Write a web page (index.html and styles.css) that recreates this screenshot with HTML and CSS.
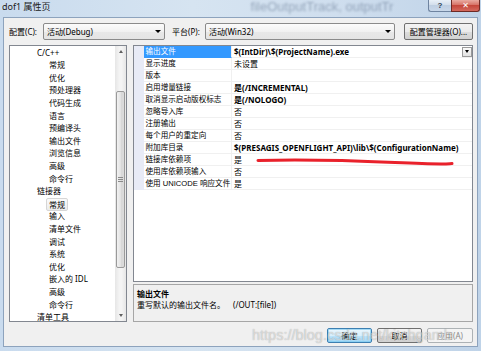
FILE: index.html
```html
<!DOCTYPE html>
<html lang="zh-CN">
<head>
<meta charset="utf-8">
<title>dof1 属性页</title>
<link rel="stylesheet" href="styles.css">
</head>
<body>
<div class="window">
  <div class="titlebar">
    <span class="title">dof1 属性页</span>
    <span class="glass-text">fileOutputTrack, outputTr</span>
    <div class="caption">
      <div class="cap-help">?</div>
      <div class="cap-close">✕</div>
    </div>
  </div>
  <div class="client">
    <div class="toprow">
      <span class="lbl lbl-cfg">配置(C):</span>
      <div class="combo combo-cfg"><span>活动(Debug)</span><i class="arrow"></i></div>
      <span class="lbl lbl-plat">平台(P):</span>
      <div class="combo combo-plat"><span>活动(Win32)</span><i class="arrow"></i></div>
      <div class="btn btn-cfgmgr">配置管理器(O)...</div>
    </div>
    <div class="main">
      <div class="tree">
        <ul class="tree-list">
          <li class="l1">C/C++</li>
          <li class="l2">常规</li>
          <li class="l2">优化</li>
          <li class="l2">预处理器</li>
          <li class="l2">代码生成</li>
          <li class="l2">语言</li>
          <li class="l2">预编译头</li>
          <li class="l2">输出文件</li>
          <li class="l2">浏览信息</li>
          <li class="l2">高级</li>
          <li class="l2">命令行</li>
          <li class="l1">链接器</li>
          <li class="l2"><span class="sel">常规</span></li>
          <li class="l2">输入</li>
          <li class="l2">清单文件</li>
          <li class="l2">调试</li>
          <li class="l2">系统</li>
          <li class="l2">优化</li>
          <li class="l2">嵌入的 IDL</li>
          <li class="l2">高级</li>
          <li class="l2">命令行</li>
          <li class="l1">清单工具</li>
        </ul>
        <div class="vscroll">
          <div class="sb-btn"><i class="tri-up"></i></div>
          <div class="sb-track">
            <div class="sb-thumb"><span class="grip"></span></div>
          </div>
          <div class="sb-btn"><i class="tri-down"></i></div>
        </div>
      </div>
      <div class="rightpane">
        <div class="grid">
          <div class="row"><span class="gut"></span><span class="name selected">输出文件</span><span class="val b">$(IntDir)\$(ProjectName).exe<span class="dd"><i class="arrow"></i></span></span></div>
          <div class="row"><span class="gut"></span><span class="name">显示进度</span><span class="val">未设置</span></div>
          <div class="row"><span class="gut"></span><span class="name">版本</span><span class="val"></span></div>
          <div class="row"><span class="gut"></span><span class="name">启用增量链接</span><span class="val b">是(/INCREMENTAL)</span></div>
          <div class="row"><span class="gut"></span><span class="name">取消显示启动版权标志</span><span class="val b">是(/NOLOGO)</span></div>
          <div class="row"><span class="gut"></span><span class="name">忽略导入库</span><span class="val">否</span></div>
          <div class="row"><span class="gut"></span><span class="name">注册输出</span><span class="val">否</span></div>
          <div class="row"><span class="gut"></span><span class="name">每个用户的重定向</span><span class="val">否</span></div>
          <div class="row"><span class="gut"></span><span class="name">附加库目录</span><span class="val b">$(PRESAGIS_OPENFLIGHT_API)\lib\$(ConfigurationName)</span></div>
          <div class="row"><span class="gut"></span><span class="name">链接库依赖项</span><span class="val">是</span></div>
          <div class="row"><span class="gut"></span><span class="name">使用库依赖项输入</span><span class="val">否</span></div>
          <div class="row"><span class="gut"></span><span class="name">使用 UNICODE 响应文件</span><span class="val">是</span></div>
        </div>
        <div class="desc">
          <div class="desc-title">输出文件</div>
          <div class="desc-text"><span class="desc-main">重写默认的输出文件名。</span><span>(/OUT:[file])</span></div>
        </div>
      </div>
    </div>
    <div class="buttons">
      <div class="btn btn-default">确定</div>
      <div class="btn">取消</div>
      <div class="btn btn-disabled">应用(A)</div>
    </div>
  </div>
  <svg class="redmark" width="481" height="351" viewBox="0 0 481 351">
    <path d="M258 160.5 C 300 159.3, 350 160.5, 395 162.5 S 440 164.2, 452 163.6" fill="none" stroke="#e9212b" stroke-width="3" stroke-linecap="round"/>
  </svg>
  <div class="watermark">https://blog.csdn.net/kitchgamb</div>
</div>
</body>
</html>
```
FILE: styles.css
```css
* { box-sizing: border-box; }
html, body { margin: 0; padding: 0; }
body {
  width: 481px;
  height: 351px;
  overflow: hidden;
  font-family: "Noto Sans", "Noto Sans CJK SC", sans-serif;
  font-size: 8px;
  color: #000;
}
.window {
  position: relative;
  width: 481px;
  height: 351px;
  display: flex;
  flex-direction: column;
  background: linear-gradient(90deg, #c9dbee 0%, #d6e4f1 40%, #cfdeee 70%, #bfd3e8 100%);
}
.titlebar {
  height: 17px;
  display: flex;
  align-items: flex-start;
  padding-left: 2px;
  overflow: hidden;
}
.title {
  font-size: 9px;
  line-height: 14px;
  color: #1a1a1a;
}
.glass-text {
  margin-left: 200px;
  font-family: "Liberation Sans", sans-serif;
  font-size: 13px;
  line-height: 13px;
  color: rgba(60, 80, 110, 0.4);
  filter: blur(1.3px);
  white-space: nowrap;
}
.caption {
  margin-left: auto;
  margin-right: 1px;
  display: flex;
}
.cap-help {
  width: 23px;
  height: 12px;
  border: 1px solid #6f84a0;
  border-top: none;
  border-right: none;
  border-radius: 0 0 0 3px;
  background: linear-gradient(#e9f0f8, #d2deeb 45%, #bfcfe2 50%, #c9d8ea);
  color: #2f3f55;
  font-family: "Liberation Sans", sans-serif;
  font-size: 8px;
  font-weight: bold;
  text-align: center;
  line-height: 11px;
}
.cap-close {
  width: 29px;
  height: 12px;
  border: 1px solid #6e2a25;
  border-top: none;
  border-radius: 0 0 3px 0;
  background: linear-gradient(#e9aba1, #d77266 45%, #c5473b 50%, #d4695d);
  color: #fff;
  font-family: "DejaVu Sans", sans-serif;
  font-size: 8px;
  font-weight: bold;
  text-align: center;
  line-height: 11px;
}
.client {
  flex: 1;
  margin: 0 3px 4px;
  background: #f0f0f0;
  border: 1px solid #8da3bd;
  padding: 5px 4px 3px 5px;
  display: flex;
  flex-direction: column;
}
.toprow {
  height: 17px;
  display: flex;
  align-items: center;
}
.lbl { white-space: nowrap; }
.lbl-cfg { width: 34px; }
.lbl-plat { width: 33px; margin-left: 7px; }
.combo {
  height: 17px;
  border: 1px solid #8a8a8a;
  border-radius: 2px;
  background: linear-gradient(#fbfbfb, #f1f1f1 50%, #e8e8e8 50%, #e4e4e4);
  display: flex;
  align-items: center;
  padding-left: 3px;
  padding-right: 3px;
}
.combo span { flex: 1; }
.combo-cfg { width: 122px; }
.combo-plat { width: 190px; }
.arrow {
  display: block;
  width: 0;
  height: 0;
  border-left: 3px solid transparent;
  border-right: 3px solid transparent;
  border-top: 3px solid #000;
}
.btn {
  height: 15px;
  border: 1px solid #707070;
  border-radius: 2px;
  background: linear-gradient(#f3f3f3, #ebebeb 50%, #dddddd 50%, #d1d1d1);
  display: flex;
  align-items: center;
  justify-content: center;
  white-space: nowrap;
}
.btn-cfgmgr {
  margin-left: 9px;
  width: 69px;
  height: 17px;
}
.main {
  margin-top: 5px;
  height: 277px;
  display: flex;
  gap: 6px;
}
.tree {
  width: 118px;
  border: 1px solid #828790;
  background: #fff;
  display: flex;
}
.tree-list {
  list-style: none;
  margin: 0;
  padding: 0.7px 0 0;
  flex: 1;
  overflow: hidden;
}
.tree-list li {
  height: 12.6px;
  line-height: 12.6px;
  white-space: nowrap;
}
.tree-list .l1 { padding-left: 27px; }
.tree-list .l2 { padding-left: 39px; }
.sel {
  display: inline-block;
  margin-left: -3px;
  padding: 0 2px;
  line-height: 11px;
  border: 1px solid #d6d6d6;
  border-radius: 2px;
  background: linear-gradient(#fafafa, #ececec);
}
.vscroll {
  width: 11px;
  display: flex;
  flex-direction: column;
  background: linear-gradient(90deg, #e6e6e6, #f4f4f4 40%, #f4f4f4 60%, #e6e6e6);
}
.sb-btn {
  height: 11px;
  display: flex;
  align-items: center;
  justify-content: center;
}
.tri-up, .tri-down {
  display: block;
  width: 0;
  height: 0;
  border-left: 2.5px solid transparent;
  border-right: 2.5px solid transparent;
}
.tri-up { border-bottom: 3px solid #606060; }
.tri-down { border-top: 3px solid #606060; }
.sb-track {
  flex: 1;
  padding: 34px 1px 0;
}
.sb-thumb {
  height: 177px;
  border: 1px solid #9a9a9a;
  border-radius: 2px;
  background: linear-gradient(90deg, #f2f2f2, #e3e3e3 50%, #d6d6d6 50%, #dcdcdc);
  display: flex;
  align-items: center;
  justify-content: center;
}
.grip {
  display: block;
  width: 5px;
  height: 5px;
  background: repeating-linear-gradient(#8a8a8a 0 1px, transparent 1px 2px);
}
.rightpane {
  flex: 1;
  display: flex;
  flex-direction: column;
  gap: 2px;
}
.grid {
  height: 237px;
  border: 1px solid #828790;
  background: #fff;
}
.row {
  display: grid;
  grid-template-columns: 10px 88px 1fr;
  height: 12px;
  line-height: 11px;
}
.gut { background: #e8ebf6; }
.name, .val {
  padding-left: 2px;
  border-bottom: 1px solid #f0f0f0;
  white-space: nowrap;
  overflow: hidden;
}
.name {
  border-right: 1px solid #f0f0f0;
  font-family: "Liberation Sans", "Noto Sans CJK SC", sans-serif;
  font-size: 7.6px;
  padding-left: 1.5px;
}
.name.selected {
  background: #3399ff;
  color: #fff;
  border-bottom-color: #3399ff;
}
.val {
  display: flex;
  padding-left: 2px;
}
.val.b { font-weight: bold; }
.dd {
  margin-left: auto;
  width: 10px;
  height: 10px;
  margin-top: 0.5px;
  border: 1px solid #9a9a9a;
  background: linear-gradient(#fafafa, #e2e2e2);
  display: flex;
  align-items: center;
  justify-content: center;
}
.dd .arrow {
  border-left-width: 2.5px;
  border-right-width: 2.5px;
  border-top-width: 3px;
}
.desc {
  flex: 1;
  border: 1px solid #a6a6a6;
  background: #f0f0f0;
  padding: 3px 0 0 3px;
  line-height: 11px;
}
.desc-title { font-weight: bold; }
.desc-main {
  display: inline-block;
  width: 96px;
}
.buttons {
  margin-top: 6px;
  display: flex;
  justify-content: flex-end;
  gap: 5px;
}
.buttons .btn { width: 45px; }
.buttons .btn-disabled { width: 46px; }
.btn-default {
  border-color: #3c7fb1;
  background: linear-gradient(#eaf6fd, #d9f0fc 50%, #bee6fd 50%, #a7d9f5);
  box-shadow: inset 0 0 0 1px rgba(120, 200, 240, 0.6);
}
.btn-disabled {
  border-color: #adb2b5;
  background: #f4f4f4;
  color: #8a8a8a;
}
.redmark {
  position: absolute;
  left: 0;
  top: 0;
  pointer-events: none;
}
.watermark {
  position: absolute;
  left: 252px;
  top: 326px;
  font-family: "Liberation Sans", sans-serif;
  font-size: 14.5px;
  line-height: 18px;
  color: rgba(255, 255, 255, 0.55);
  text-shadow: 0 0 1px rgba(0, 0, 0, 0.35);
  white-space: nowrap;
  pointer-events: none;
}
```
